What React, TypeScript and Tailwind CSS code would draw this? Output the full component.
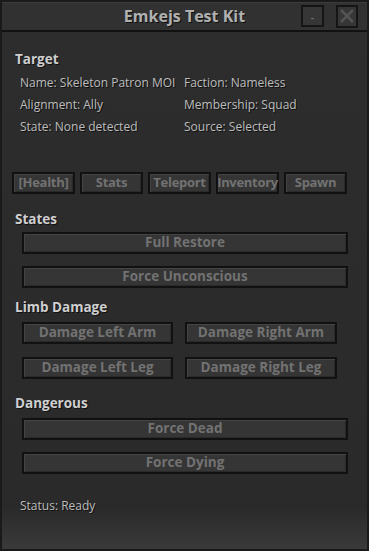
import React from "react";

const font = { fontFamily: '"Open Sans", "Noto Sans", sans-serif' };

function Btn({ label, className = "" }: { label: string; className?: string }) {
  return (
    <div
      className={
        "flex items-center justify-center border-2 border-[#111] bg-[#353535] shadow-[inset_1px_1px_0_#444,inset_-1px_-1px_0_#2a2a2a] font-bold text-[#727272] leading-none whitespace-nowrap " +
        className
      }
    >
      {label}
    </div>
  );
}

function Heading({ children }: { children: React.ReactNode }) {
  return (
    <div className="text-[13.5px] font-bold text-[#cfcfcf] leading-none [text-shadow:1px_1px_0_#111]">
      {children}
    </div>
  );
}

export default function App() {
  const tabs = ["[Health]", "Stats", "Teleport", "Inventory", "Spawn"];
  return (
    <div style={font} className="w-[369px] h-[551px] bg-[#1a1a1a] p-[2px] flex flex-col">
      <div className="h-[30px] bg-[#313131] flex items-center relative border-b-2 border-[#111] shrink-0 shadow-[inset_0_1px_0_#3c3c3c]">
        <div className="absolute inset-0 flex items-center justify-center text-[16px] font-bold text-[#b0b0b0] [text-shadow:1px_1px_0_#111]">
          Emkejs Test Kit
        </div>
        <div className="ml-auto flex items-center gap-[12px] mr-[9px] relative">
          <div className="w-[23px] h-[22px] border-2 border-[#151515] bg-[#363636] flex items-center justify-center text-[#6a6a6a] text-[11px] font-bold leading-none">
            -
          </div>
          <div className="w-[22px] h-[23px] border-2 border-[#151515] bg-[#363636] flex items-center justify-center">
            <svg width="14" height="14" viewBox="0 0 14 14">
              <path d="M2 2 L12 12 M12 2 L2 12" stroke="#555" strokeWidth="2.5" strokeLinecap="square" />
            </svg>
          </div>
        </div>
      </div>
      <div className="flex-1 bg-[linear-gradient(to_bottom,#2d2d2d_0%,#2a2a2a_92%,#3a3a3a_100%)] flex flex-col px-[13px] pt-[21px]">
        <Heading>Target</Heading>
        <div className="grid grid-cols-[164px_1fr] gap-y-[8px] mt-[9px] pl-[5px] text-[12px] text-[#bdbdbd] leading-[14px] [text-shadow:1px_1px_0_#111]">
          <div className="whitespace-nowrap">Name: Skeleton Patron MOI</div>
          <div>Faction: Nameless</div>
          <div>Alignment: Ally</div>
          <div>Membership: Squad</div>
          <div>State: None detected</div>
          <div>Source: Selected</div>
        </div>
        <div className="flex gap-[5px] mt-[38px] -ml-[3px]">
          {tabs.map((t) => (
            <Btn key={t} label={t} className="w-[63px] h-[22px] text-[13px] tracking-[-0.3px]" />
          ))}
        </div>
        <div className="mt-[19px]">
          <Heading>States</Heading>
        </div>
        <div className="pl-[7px] pr-[6px] flex flex-col gap-[12px] mt-[6px]">
          <Btn label="Full Restore" className="h-[22px] text-[13.5px]" />
          <Btn label="Force Unconscious" className="h-[22px] text-[13.5px]" />
        </div>
        <div className="mt-[13px]">
          <Heading>Limb Damage</Heading>
        </div>
        <div className="pl-[7px] grid grid-cols-[151px_152px] gap-x-[12px] gap-y-[13px] mt-[7px]">
          <Btn label="Damage Left Arm" className="h-[22px] text-[13.5px]" />
          <Btn label="Damage Right Arm" className="h-[22px] text-[13.5px]" />
          <Btn label="Damage Left Leg" className="h-[22px] text-[13.5px]" />
          <Btn label="Damage Right Leg" className="h-[22px] text-[13.5px]" />
        </div>
        <div className="mt-[18px]">
          <Heading>Dangerous</Heading>
        </div>
        <div className="pl-[7px] pr-[6px] flex flex-col gap-[12px] mt-[8px]">
          <Btn label="Force Dead" className="h-[22px] text-[13.5px]" />
          <Btn label="Force Dying" className="h-[22px] text-[13.5px]" />
        </div>
        <div className="mt-[23px] pl-[5px] text-[12px] text-[#bdbdbd] [text-shadow:1px_1px_0_#111]">
          Status: Ready
        </div>
      </div>
    </div>
  );
}
